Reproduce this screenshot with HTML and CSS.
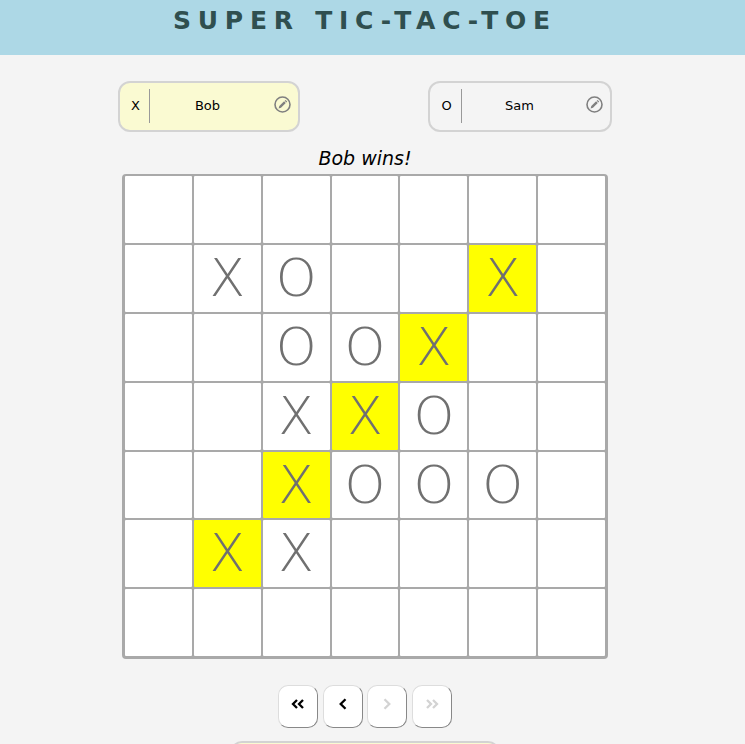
FILE: index.html
```
<!DOCTYPE html>
<html lang="en">
<head>
<meta charset="utf-8">
<title>Super Tic-Tac-Toe</title>
<link rel="stylesheet" href="styles.css">
</head>
<body>
<header class="header"><h1>SUPER TIC-TAC-TOE</h1></header>
<main>
<section class="players">
<div class="player active"><span class="mark">X</span><span class="name">Bob</span><svg class="edit" viewBox="0 0 17 17"><circle cx="8.5" cy="8.5" r="7.5"/><path class="pencil" d="M4.6 12.5l.7-2.4 4.8-4.8 1.7 1.7-4.8 4.8zM10.7 4.7l.8-.8 1.7 1.7-.8.8z"/></svg></div>
<div class="player second"><span class="mark">O</span><span class="name">Sam</span><svg class="edit" viewBox="0 0 17 17"><circle cx="8.5" cy="8.5" r="7.5"/><path class="pencil" d="M4.6 12.5l.7-2.4 4.8-4.8 1.7 1.7-4.8 4.8zM10.7 4.7l.8-.8 1.7 1.7-.8.8z"/></svg></div>
</section>
<p class="status">Bob wins!</p>
<section class="board">
<div></div><div></div><div></div><div></div><div></div><div></div><div></div>
<div></div><div>X</div><div>O</div><div></div><div></div><div class="win">X</div><div></div>
<div></div><div></div><div>O</div><div>O</div><div class="win">X</div><div></div><div></div>
<div></div><div></div><div>X</div><div class="win">X</div><div>O</div><div></div><div></div>
<div></div><div></div><div class="win">X</div><div>O</div><div>O</div><div>O</div><div></div>
<div></div><div class="win">X</div><div>X</div><div></div><div></div><div></div><div></div>
<div></div><div></div><div></div><div></div><div></div><div></div><div></div>
</section>
<nav class="history">
<button><svg viewBox="0 0 14 14"><path d="M6 3L2 7l4 4M12 3L8 7l4 4"/></svg></button>
<button><svg viewBox="0 0 14 14"><path d="M9.5 2.2L4.7 7l4.8 4.8"/></svg></button>
<button disabled><svg viewBox="0 0 14 14"><path d="M4.5 2.2L9.3 7l-4.8 4.8"/></svg></button>
<button disabled><svg viewBox="0 0 14 14"><path d="M2 3l4 4-4 4M8 3l4 4-4 4"/></svg></button>
</nav>
<section class="panel"></section>
</main>
</body>
</html>
```
FILE: styles.css
```
* { box-sizing: border-box; }
html, body { height: 100%; }
body { margin: 0; overflow: hidden; background: #f4f4f4; font-family: "DejaVu Sans", sans-serif; color: #000; }
.header { height: 55px; background: #add8e6; text-align: center; }
h1 { margin: 0; padding: 6px 15px 0 0; font-size: 25px; line-height: 30px; letter-spacing: 6.75px; color: #2f4f4f; white-space: nowrap; }
main { height: 689px; overflow: hidden; }
.players { display: flex; justify-content: space-between; padding: 26px 133px 0 118px; }
.player { display: flex; align-items: center; width: 182px; height: 51px; padding-bottom: 2px; border: 2px solid #d3d3d3; border-radius: 12px; font-size: 13px; }
.player.second { width: 184px; }
.active { background: #fafad2; }
.mark { width: 30px; height: 34px; line-height: 34px; padding-left: 2px; text-align: center; border-right: 1px solid #999; }
.second .mark { width: 32px; }
.name { flex: 1; text-align: center; padding-right: 9px; }
.edit { width: 17px; height: 17px; margin: -3px 7px 0 0; fill: none; stroke: #808080; stroke-width: 1.6; }
.pencil { fill: #808080; stroke: none; }
.status { margin: 14px 0 0; padding-right: 15px; text-align: center; font-size: 19px; line-height: 24px; font-style: italic; }
.board { width: 486px; height: 485px; margin: 4.2px 0 0 122px; display: grid; grid-template: repeat(7, 1fr) / repeat(7, 1fr); gap: 2px; border: solid #a9a9a9; border-width: 2px 3px 3px; border-radius: 4px; background: #a9a9a9; }
.board div { display: flex; align-items: center; justify-content: center; min-width: 0; min-height: 0; overflow: hidden; background: #fff; border-radius: 1px; color: #707070; font-size: 52px; font-weight: 200; line-height: 60px; padding-bottom: 1px; }
.board .win { background: #ff0; }
.history { display: flex; justify-content: center; gap: 4.4px; margin-top: 25.8px; padding-right: 15px; }
button { display: flex; align-items: center; justify-content: center; width: 40px; height: 43px; padding: 0 0 5px; background: #fff; border: 1px solid #ddd; border-right-color: #888; border-bottom-color: #888; border-radius: 10px; }
button svg { width: 14px; height: 14px; fill: none; stroke: #000; stroke-width: 2.3; }
button:disabled svg { stroke: #d3d3d3; }
.panel { width: 270px; height: 51px; margin: 13px 0 0 230px; background: #fafad2; border: 2px solid #d3d3d3; border-radius: 12px; }
```
